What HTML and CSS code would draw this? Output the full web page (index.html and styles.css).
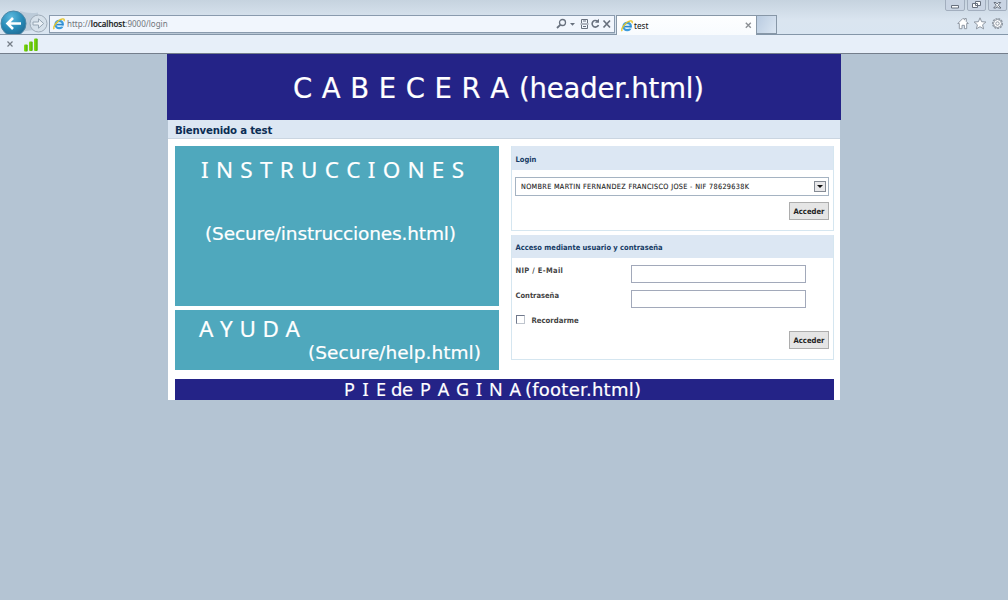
FILE: index.html
```html
<!DOCTYPE html>
<html lang="es">
<head>
<meta charset="utf-8">
<title>test</title>
<link rel="stylesheet" href="styles.css">
</head>
<body>
<svg class="defs" width="0" height="0" aria-hidden="true">
  <defs>
    <radialGradient id="back" cx=".4" cy=".25" r=".8"><stop offset="0" stop-color="#5cb9de"/><stop offset=".6" stop-color="#2588b5"/><stop offset="1" stop-color="#23688f"/></radialGradient>
    <linearGradient id="bars" x1="0" x2="1"><stop offset="0" stop-color="#8be010"/><stop offset="1" stop-color="#4aae06"/></linearGradient>
    <symbol id="ie" viewBox="0 0 12 12">
      <circle cx="6.2" cy="6.5" r="3.7" fill="#d8f0fb" stroke="#3b9bdc" stroke-width="2.2"/>
      <path d="M3.5 6.6H10" stroke="#2f86cc" stroke-width="1.5"/>
      <path d="M8.3 8.2h3.5" stroke="#eaf4fb" stroke-width="1"/>
      <path d="M1.2 11.2C-.6 9 4.6 1.6 9.6.9c2-.2 1.9 1.2 1.3 2.4" fill="none" stroke="#e3c42c" stroke-width="1.3"/>
    </symbol>
  </defs>
</svg>
<div class="browser">
  <div class="nav">
    <svg class="arrows" width="50" height="25" viewBox="0 0 50 25">
      <path d="M20 2Q29 5 38 3.500V22Q28 20 20 24Z" fill="#bccbd9"/>
      <circle cx="13.500" cy="14.500" r="12.500" fill="url(#back)" stroke="#4c87a6"/>
      <path d="M7.500 14.500H21M13 9l-5.500 5.500L13 20" fill="none" stroke="#fff" stroke-width="2.600"/>
      <circle cx="38.500" cy="14.500" r="8.500" fill="#d5e0ea" stroke="#9eabb8"/>
      <path d="M33 13h5.500V9.800l5.200 4.700-5.200 4.700V16H33z" fill="#e9f0f6" stroke="#96a5b3"/>
    </svg>
    <div class="address">
      <svg width="12" height="12"><use href="#ie"/></svg>
      <span class="url">http://<b>localhost</b>:9000/login</span>
      <svg class="tools" width="56" height="12" viewBox="0 0 56 12" fill="none" stroke="#68717e">
        <circle cx="6.500" cy="4.500" r="3" stroke-width="1.300"/><path d="M4.300 6.800L1 10" stroke-width="1.800"/>
        <path d="M14 5h5l-2.500 2.800z" fill="#68717e" stroke="none"/>
        <path d="M25.500 5V1.500h6V5M25.500 7v3.500h6V7M24.500 6h8M27 3h3M27 8.500h3"/>
        <path d="M41.500 3.200A3.300 3.300 0 1 0 42.500 7" stroke-width="1.600"/><path d="M39 4.800h4V.8z" fill="#68717e" stroke="none"/>
        <path d="M47.500 2.500l6.500 7M54 2.500l-6.500 7" stroke-width="1.700"/>
      </svg>
    </div>
    <div class="tab">
      <svg width="12" height="12"><use href="#ie"/></svg>
      <span class="tab-name">test</span>
      <svg class="tab-close" width="7" height="7" viewBox="0 0 7 7" stroke="#8c9095" stroke-width="1.400"><path d="M.8.8l5 5M5.800.8l-5 5"/></svg>
    </div>
    <div class="new-tab"></div>
    <div class="controls">
      <svg width="64" height="11" viewBox="0 0 64 11">
        <path d="M1.500 0V9q0 1.500 1.500 1.500H19q1.500 0 1.500-1.500V0M23.500 0V9q0 1.500 1.500 1.500H40q1.500 0 1.500-1.500V0M44.500 0V9q0 1.500 1.500 1.500H61q1.500 0 1.500-1.500V0" fill="#c9d4e3" stroke="#a2aebe"/>
        <g fill="#f8fafc" stroke="#67707e"><path d="M7.500 5.500h7v2.500h-7z"/><path d="M31.500 1.500h5v4h-5zM28.500 3.500h5v4h-5z"/><path d="M50 2.500h2l1.200 1.500 1.300-1.500h2.200L54.300 5.200 57 8h-2.500l-1.300-1.500L52 8h-2.300l2.500-2.800z"/></g>
      </svg>
      <svg width="48" height="13" viewBox="0 0 48 13" fill="#fff" stroke="#8f98a3">
        <path d="M.8 6.500L6 1.300l1.700 1.600V1.500h1.600v3l2 2H9.700v5.200H7.400V8.300H5v3.400H2.300V6.500z"/>
        <path d="M23 .8l1.600 3.900 4.300.3-3.300 2.800 1 4.100-3.600-2.200-3.600 2.200 1-4.100-3.300-2.800 4.300-.3z"/>
        <circle cx="40.500" cy="6.500" r="4.700" stroke-width="1.700" stroke-dasharray="2 .8"/><circle cx="40.500" cy="6.500" r="4"/><circle cx="40.500" cy="6.500" r="1.700"/>
      </svg>
    </div>
  </div>
  <div class="commands">
    <svg width="40" height="18" viewBox="0 0 40 18">
      <path d="M7.500 6.500l5 5M12.500 6.500l-5 5" stroke="#747c86" stroke-width="1.200"/>
      <g fill="url(#bars)"><rect x="24" y="9.500" width="3.700" height="7" rx="1"/><rect x="29" y="6.500" width="3.700" height="9.500" rx="1"/><rect x="34" y="3.500" width="3.700" height="12.500" rx="1"/></g>
    </svg>
  </div>
</div>
<main class="page">
  <svg class="banner" width="674" height="66">
    <text x="126" y="44" font-size="27.500" textLength="216">C A B E C E R A</text>
    <text x="352" y="44" font-size="27.500" textLength="185">(header.html)</text>
  </svg>
  <div class="sheet">
    <h1 class="title">Bienvenido a test</h1>
    <div class="columns">
      <div class="info">
        <svg class="help" width="324" height="160">
          <text class="caps" x="26" y="32" font-size="22.500" textLength="263">I N S T R U C C I O N E S</text>
          <text x="30" y="94" font-size="18.500" textLength="251">(Secure/instrucciones.html)</text>
        </svg>
        <svg class="help" width="324" height="60">
          <text class="caps" x="24" y="27" font-size="22.500" textLength="101">A Y U D A</text>
          <text x="133" y="49" font-size="18.500" textLength="173">(Secure/help.html)</text>
        </svg>
      </div>
      <div class="forms">
        <section class="panel cert">
          <h2>Login</h2>
          <div class="select"><span>NOMBRE MARTIN FERNANDEZ FRANCISCO JOSE - NIF 78629638K</span><i class="drop"></i></div>
          <button>Acceder</button>
        </section>
        <section class="panel account">
          <h2>Acceso mediante usuario y contraseña</h2>
          <label class="field"><span class="nip">NIP / E-Mail</span><input type="text"></label>
          <label class="field"><span>Contraseña</span><input type="password"></label>
          <label class="remember"><i class="check"></i><span>Recordarme</span></label>
          <button>Acceder</button>
        </section>
      </div>
    </div>
    <svg class="banner footer" width="659" height="21">
      <text class="caps" x="169" y="17" font-size="18" textLength="42">P I E</text>
      <text x="216" y="17" font-size="18" textLength="22">de</text>
      <text class="caps" x="245" y="17" font-size="18" textLength="101">P A G I N A</text>
      <text x="350" y="17" font-size="18" textLength="116">(footer.html)</text>
    </svg>
  </div>
</main>
</body>
</html>
```
FILE: styles.css
```css
* { box-sizing: border-box; }
body { margin: 0; height: 600px; overflow: hidden; background: #b4c4d3; font-family: "DejaVu Sans Condensed", "DejaVu Sans", sans-serif; }
svg { display: block; flex: none; }
.defs { position: absolute; }

.nav { display: flex; height: 35px; background: linear-gradient(#c6d3df, #dae5f0 60%, #d9e5f1); border-bottom: 1px solid #8496a8; }
.arrows { margin-top: 9px; }
.address { display: flex; align-items: center; width: 566px; height: 18px; margin: 15px 0 0 -1px; padding: 0 2px 0 3px; background: #f1f6fd; border: 1px solid #8a9bae; box-shadow: 0 1px #bac8d6; }
.url { margin-left: 2px; font: 8px/16px "Noto Sans", sans-serif; color: #70757b; white-space: nowrap; }
.url b { font-weight: 500; color: #171b20; -webkit-text-stroke: .2px #171b20; }
.tools { margin-left: auto; }
.tab { display: flex; align-items: center; width: 141px; height: 20px; margin: 15px 0 0 1px; padding: 1px 4px; background: linear-gradient(#fdfeff, #f8fbfe); border: 1px solid #8797a7; border-bottom: 0; }
.tab-name { margin-left: 1px; font: 8.2px/14px "Noto Sans", sans-serif; color: #111; }
.tab-close { margin-left: auto; }
.new-tab { width: 20px; height: 19px; margin-top: 15px; background: linear-gradient(120deg, #b9cbe0, #dbe6f2); border: 1px solid #8797a7; border-left: 0; }
.controls { display: flex; flex-direction: column; width: 64px; margin-left: auto; }
.controls svg + svg { margin: 6px 0 0 13px; }
.commands { height: 19px; background: #e7eff9; border-bottom: 1px solid #747e8b; }

.page { width: 674px; margin: 0 auto; }
.banner { background: #242387; fill: #fff; }
.banner text, .help text { font-family: "DejaVu Sans", sans-serif; stroke: #fff; stroke-width: .2px; }
.banner .caps, .help .caps { font-family: "Noto Sans", sans-serif; }
.sheet { height: 280px; margin: 0 1px; background: #fff; }
.title { height: 19px; margin: 0; padding-left: 7px; background: #dce7f3; border-bottom: 1px solid #cad5e1; color: #0b2d54; font-size: 11.3px; line-height: 21px; letter-spacing: -.2px; }
.columns { display: flex; justify-content: space-between; height: 233px; padding: 7px 6px 0 7px; }
.info { display: flex; flex-direction: column; gap: 4px; }
.help { background: #4fa8bd; fill: #fff; }

.forms { display: flex; flex-direction: column; gap: 4px; width: 323px; }
.panel { display: flex; flex-direction: column; border: 1px solid #d5e6f0; border-top: 0; }
.cert { height: 85px; }
.account { height: 125px; }
.panel h2 { height: 24px; margin: 0 0 7px; padding-left: 3.5px; background: #dce7f3; color: #163b65; font-size: 7.5px; line-height: 27px; }
.account h2 { height: 23px; line-height: 25px; }
.select { display: flex; align-items: center; justify-content: space-between; height: 19px; margin: 0 4px 6px 3px; padding: 0 2px 0 5px; border: 1px solid #a5b3c2; color: #222; font-size: 7.2px; white-space: nowrap; }
.select span { letter-spacing: .34px; -webkit-text-stroke: .1px #222; }
.drop { display: flex; align-items: center; justify-content: center; width: 12px; height: 11px; background: #e8e8ea; border: 1px solid #858b94; }
.drop::after { content: ""; border: 3px solid transparent; border-top-color: #111; border-bottom: 0; }
button { align-self: flex-end; width: 40px; height: 18px; margin-right: 4px; padding: 1px 0 0; background: #e5e5e5; border: 1px solid #adadad; border-radius: 0; color: #222; font: bold 7.6px/14px "DejaVu Sans Condensed", sans-serif; }
.field { display: flex; height: 18px; margin: 0 0 7px 3.5px; color: #444; font-size: 7.5px; font-weight: bold; line-height: 11px; }
.field span { width: 115px; }
.field .nip { letter-spacing: .35px; }
.field input { width: 175px; height: 18px; padding: 0 3px; border: 1px solid #a2a9ba; background: #fff; outline: 0; }
.remember { display: flex; height: 10px; margin: 0 0 6px 3.5px; color: #444; font-size: 7.7px; font-weight: bold; line-height: 12px; }
.check { width: 9px; height: 9px; margin: -.5px 7px 0 0; border: 1px solid #70798c; border-right-color: #bfc5ce; border-bottom-color: #bfc5ce; background: #fff; }
.footer { margin: 7px 0 0 7px; overflow: visible; }
```
